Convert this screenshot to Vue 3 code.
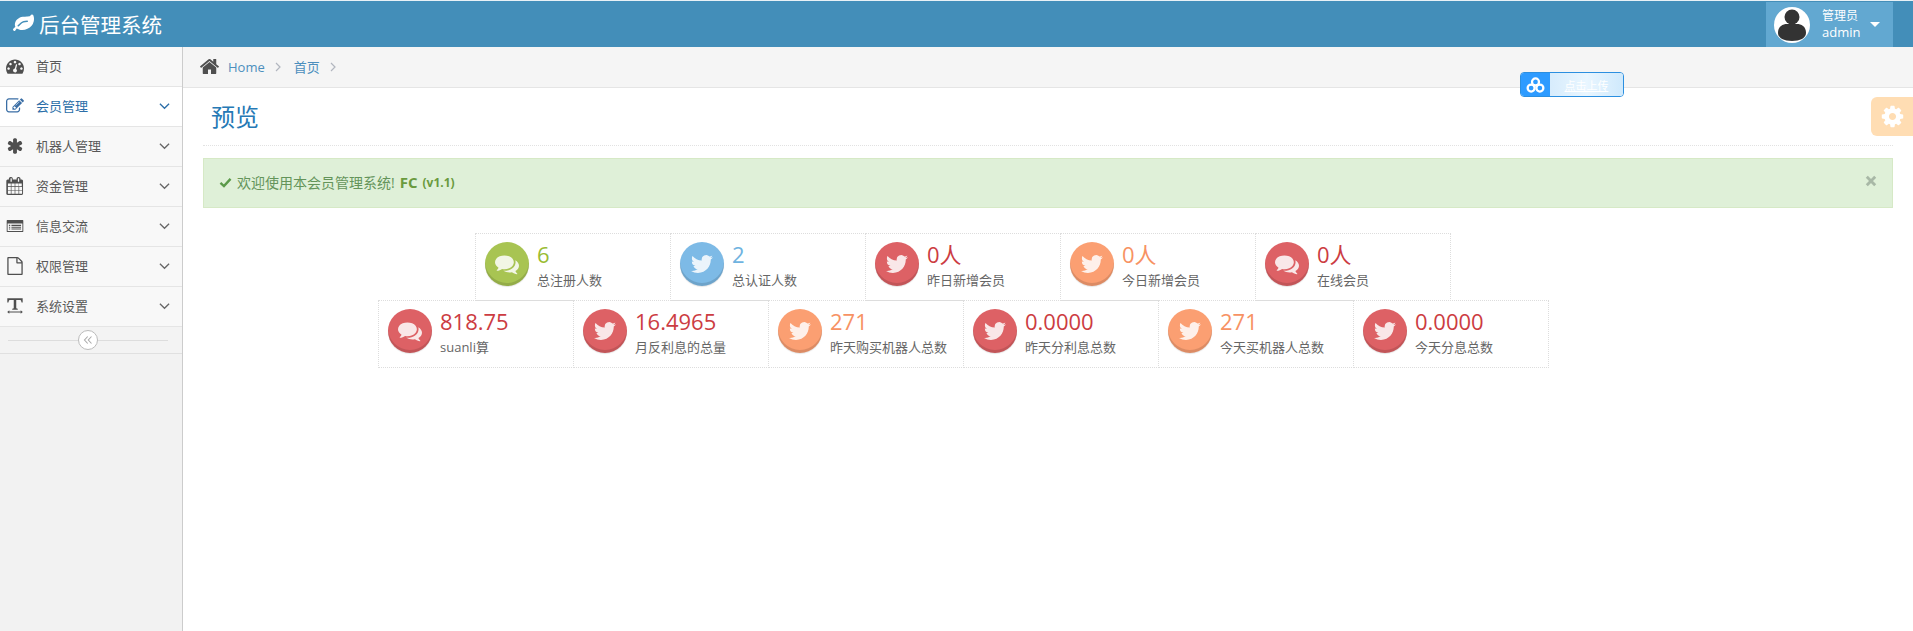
<template>
  <div class="app">
    <header class="navbar">
      <div class="brand">
        <svg class="brand-icon" viewBox="0 0 1792 1792"><path :d="icons.leaf" /></svg>
        <span>后台管理系统</span>
      </div>
      <div class="user">
        <svg class="avatar" viewBox="0 0 36 36">
          <circle cx="18" cy="18" r="18" fill="#fff" />
          <circle cx="18" cy="10" r="7.5" fill="#333" />
          <path d="M4 26c0-7 5-9 9-9h10c4 0 9 2 9 9 0 5-6 8-14 8s-14-3-14-8z" fill="#333" />
        </svg>
        <div class="user-text">
          <small>管理员</small>
          <span>admin</span>
        </div>
        <i class="caret"></i>
      </div>
    </header>

    <div class="main">
      <aside class="sidebar">
        <ul class="menu">
          <li v-for="item in menu" :key="item.text" :class="{ active: item.active }">
            <svg class="menu-icon" viewBox="0 0 1792 1792" v-html="item.svg"></svg>
            <span class="menu-text">{{ item.text }}</span>
            <svg v-if="item.sub" class="chevron" viewBox="0 0 12 8"><path d="M1 1.5l5 5 5-5" /></svg>
          </li>
        </ul>
        <div class="collapse">
          <div class="collapse-btn">
            <svg viewBox="0 0 10 10"><path d="M4.7 1.5L1.5 5l3.2 3.5M8.5 1.5L5.3 5l3.2 3.5" /></svg>
          </div>
        </div>
      </aside>

      <section class="content">
        <nav class="breadcrumbs">
          <svg class="home" viewBox="0 0 1792 1792"><path :d="icons.home" /></svg>
          <a>Home</a>
          <svg class="sep" viewBox="0 0 6 10"><path d="M1 1l4 4-4 4" /></svg>
          <a>首页</a>
          <svg class="sep" viewBox="0 0 6 10"><path d="M1 1l4 4-4 4" /></svg>
        </nav>

        <div class="page">
          <div class="page-header">
            <h1>预览</h1>
          </div>

          <div class="alert">
            <div class="alert-text">
              <svg class="check" viewBox="0 0 14 12"><path d="M1.5 6.5l3.8 3.5 7.2-8" /></svg>
              <span>欢迎使用本会员管理系统!</span>
              <strong>FC</strong>
              <b>(v1.1)</b>
            </div>
            <svg class="close" viewBox="0 0 10 10"><path d="M1.5 1.5l7 7M8.5 1.5l-7 7" /></svg>
          </div>

          <div class="stats">
            <div v-for="(row, i) in rows" :key="i" class="stat-row">
              <div v-for="box in row" :key="box.label" class="stat" :class="box.color">
                <div class="circle">
                  <svg v-if="box.icon === 'chat'" class="chat" viewBox="0 0 1792 1792"><path :d="icons.comments" /></svg>
                  <svg v-else class="bird" viewBox="0 0 24 24"><path :d="icons.twitter" /></svg>
                </div>
                <div class="stat-data">
                  <div class="num">{{ box.num }}</div>
                  <div class="label">{{ box.label }}</div>
                </div>
              </div>
            </div>
          </div>
        </div>
      </section>
    </div>

    <div class="pan">
      <div class="pan-icon">
        <svg viewBox="0 0 24 20">
          <circle cx="12" cy="6.5" r="4" />
          <circle cx="7" cy="13.5" r="4" />
          <circle cx="17" cy="13.5" r="4" />
        </svg>
      </div>
      <div class="pan-text"><span>点击上传</span></div>
    </div>

    <div class="settings">
      <svg viewBox="0 0 1792 1792"><path :d="icons.cog" /></svg>
    </div>
  </div>
</template>

<script setup>
const icons = {
  leaf: 'M1280 704q0-26-19-45t-45-19q-172 0-318 49.5t-259.5 134-235.5 219.5q-19 21-19 45 0 26 19 45t45 19q24 0 45-19 27-24 74-71t67-66q137-124 268.5-176t313.5-52q26 0 45-19t19-45zm512-198q0 95-20 193-46 224-184.5 383t-357.5 268q-214 108-438 108-148 0-286-47-15-5-88-42t-96-37q-16 0-39.5 32t-45 70-52.5 70-60 32q-43 0-63.5-17.5t-45.5-59.5q-2-4-6-11t-5.5-10-3-9.5-1.5-13.5q0-35 31-73.5t68-65.5 68-56 31-48q0-4-14-38t-16-44q-9-51-9-104 0-115 43.5-220t119-184.5 170.5-139 204-95.5q55-18 145-25.5t179.5-9 178.5-6 163.5-24 113.5-56.5l29.5-29.5 29.5-28 27-20 36.5-16 43.5-4.5q39 0 70.5 46t47.5 112 24 124 8 96z',
  home: 'M1472 992v480q0 26-19 45t-45 19h-384v-384h-256v384h-384q-26 0-45-19t-19-45v-480q0-1 .5-3t.5-3l575-474 575 474q1 2 1 6zm223-69l-62 74q-8 9-21 11h-3q-13 0-21-7l-692-577-692 577q-12 8-24 7-13-2-21-11l-62-74q-8-10-7-23.5t11-21.5l719-599q32-26 76-26t76 26l244 204v-195q0-14 9-23t23-9h192q14 0 23 9t9 23v408l219 182q10 8 11 21.5t-7 23.5z',
  comments: 'M1408 768q0 139-94 257t-256.5 186.5-353.5 68.5q-86 0-176-16-124 88-278 128-36 9-86 16h-3q-11 0-20.5-8t-11.5-21q-1-3-1-6.5t.5-6.5 2-6l2.5-5 3.5-5.5 4-5 4.5-5 4-4.5q5-6 23-25t26-29.5 22.5-29 25-38.5 20.5-44q-124-72-195-177t-71-224q0-139 94-257t256.5-186.5 353.5-68.5 353.5 68.5 256.5 186.5 94 257zm384 256q0 120-71 224.5t-195 176.5q10 24 20.5 44t25 38.5 22.5 29 26 29.5 23 25q1 1 4 4.5t4.5 5 4 5 3.5 5.5l2.5 5 2 6 .5 6.5-1 6.5q-3 14-13 22t-22 7q-50-7-86-16-154-40-278-128-90 16-176 16-271 0-472-132 58 4 88 4 161 0 309-45t264-129q125-92 192-212t67-254q0-77-23-152 129 71 204 178t75 230z',
  twitter: 'M23.953 4.57a10 10 0 01-2.825.775 4.958 4.958 0 002.163-2.723c-.951.555-2.005.959-3.127 1.184a4.92 4.92 0 00-8.384 4.482C7.69 8.095 4.067 6.13 1.64 3.162a4.822 4.822 0 00-.666 2.475c0 1.71.87 3.213 2.188 4.096a4.904 4.904 0 01-2.228-.616v.06a4.923 4.923 0 003.946 4.827 4.996 4.996 0 01-2.212.085 4.936 4.936 0 004.604 3.417 9.867 9.867 0 01-6.102 2.105c-.39 0-.779-.023-1.17-.067a13.995 13.995 0 007.557 2.209c9.053 0 13.998-7.496 13.998-13.985 0-.21 0-.42-.015-.63A9.935 9.935 0 0024 4.59z',
  cog: 'M1152 896q0-106-75-181t-181-75-181 75-75 181 75 181 181 75 181-75 75-181zm512-109v222q0 12-8 23t-20 13l-185 28q-19 54-39 91 35 50 107 138 10 12 10 25t-9 23q-27 37-99 108t-94 71q-12 0-26-9l-138-108q-44 23-91 38-16 136-29 186-7 28-36 28h-222q-14 0-24.5-8.5t-11.5-21.5l-28-184q-49-16-90-37l-141 107q-10 9-25 9-14 0-25-11-126-114-165-168-7-10-7-23 0-12 8-23 15-21 51-66.5t54-70.5q-27-50-41-99l-183-27q-13-2-21-12.5t-8-23.5v-222q0-12 8-23t19-13l186-28q14-46 39-92-40-57-107-138-10-12-10-24 0-10 9-23 26-36 98.5-107.5t94.5-71.5q13 0 26 10l138 107q44-23 91-38 16-136 29-186 7-28 36-28h222q14 0 24.5 8.5t11.5 21.5l28 184q49 16 90 37l142-107q9-9 24-9 13 0 25 10 129 119 165 170 7 8 7 22 0 12-8 23-15 21-51 66.5t-54 70.5q26 50 41 98l183 28q13 2 21 12.5t8 23.5z',
}

const p = (d) => `<path fill="currentColor" d="${d}"/>`

const menu = [
  { text: '首页', svg: p('M384 1152q0-53-37.5-90.5t-90.5-37.5-90.5 37.5-37.5 90.5 37.5 90.5 90.5 37.5 90.5-37.5 37.5-90.5zm192-448q0-53-37.5-90.5t-90.5-37.5-90.5 37.5-37.5 90.5 37.5 90.5 90.5 37.5 90.5-37.5 37.5-90.5zm428 481l101-382q6-26-7.5-48.5t-38.5-29.5-48 6.5-30 39.5l-101 382q-60 5-107 43.5t-63 98.5q-20 77 20 146t117 89 146-20 89-117q16-60-6-117t-72-91zm660-33q0-53-37.5-90.5t-90.5-37.5-90.5 37.5-37.5 90.5 37.5 90.5 90.5 37.5 90.5-37.5 37.5-90.5zm-640-640q0-53-37.5-90.5t-90.5-37.5-90.5 37.5-37.5 90.5 37.5 90.5 90.5 37.5 90.5-37.5 37.5-90.5zm448 192q0-53-37.5-90.5t-90.5-37.5-90.5 37.5-37.5 90.5 37.5 90.5 90.5 37.5 90.5-37.5 37.5-90.5zm320 448q0 261-141 483-19 29-54 29h-1402q-35 0-54-29-141-221-141-483 0-182 71-348t191-286 286-191 348-71 348 71 286 191 191 286 71 348z') },
  { text: '会员管理', sub: true, active: true, svg: p('M888 1184l116-116-152-152-116 116v56h96v96h56zm440-720q-16-16-33 1l-350 350q-17 17-1 33t33-1l350-350q17-17 1-33zm80 594v190q0 119-84.5 203.5t-203.5 84.5h-832q-119 0-203.5-84.5t-84.5-203.5v-832q0-119 84.5-203.5t203.5-84.5h832q63 0 117 25 15 7 18 23 3 17-9 29l-49 49q-14 14-32 8-23-6-45-6h-832q-66 0-113 47t-47 113v832q0 66 47 113t113 47h832q66 0 113-47t47-113v-126q0-13 9-22l64-64q15-15 35-7t20 29zm-96-738l288 288-672 672h-288v-288zm444 132l-92 92-288-288 92-92q28-28 68-28t68 28l152 152q28 28 28 68t-28 68z') },
  { text: '机器人管理', sub: true, svg: p('M1546 1050q46 26 59.5 77.5t-12.5 97.5l-64 110q-26 46-77.5 59.5t-97.5-12.5l-266-153v307q0 52-38 90t-90 38h-128q-52 0-90-38t-38-90v-307l-266 153q-46 26-97.5 12.5t-77.5-59.5l-64-110q-26-46-12.5-97.5t59.5-77.5l266-154-266-154q-46-26-59.5-77.5t12.5-97.5l64-110q26-46 77.5-59.5t97.5 12.5l266 153v-307q0-52 38-90t90-38h128q52 0 90 38t38 90v307l266-153q46-26 97.5-12.5t77.5 59.5l64 110q26 46 12.5 97.5t-59.5 77.5l-266 154z') },
  { text: '资金管理', sub: true, svg: p('M192 1664h288v-288h-288v288zm352 0h320v-288h-320v288zm-352-352h288v-320h-288v320zm352 0h320v-320h-320v320zm-352-384h288v-288h-288v288zm736 736h320v-288h-320v288zm-384-736h320v-288h-320v288zm768 736h288v-288h-288v288zm-384-352h320v-320h-320v320zm-352-864v-288q0-13-9.5-22.5t-22.5-9.5h-64q-13 0-22.5 9.5t-9.5 22.5v288q0 13 9.5 22.5t22.5 9.5h64q13 0 22.5-9.5t9.5-22.5zm736 864h288v-320h-288v320zm-384-384h320v-288h-320v288zm352 0h288v-288h-288v288zm32-480v-288q0-13-9.5-22.5t-22.5-9.5h-64q-13 0-22.5 9.5t-9.5 22.5v288q0 13 9.5 22.5t22.5 9.5h64q13 0 22.5-9.5t9.5-22.5zm384-64v1280q0 52-38 90t-90 38h-1408q-52 0-90-38t-38-90v-1280q0-52 38-90t90-38h128v-96q0-66 47-113t113-47h64q66 0 113 47t47 113v96h384v-96q0-66 47-113t113-47h64q66 0 113 47t47 113v96h128q52 0 90 38t38 90z') },
  { text: '信息交流', sub: true, svg: '<path fill="currentColor" fill-rule="evenodd" d="M110 300h1572q40 0 40 40v1110q0 40-40 40H110q-40 0-40-40V340q0-40 40-40zm50 340v760h1472V640H160z"/><path fill="currentColor" d="M290 780h130v110H290zM290 960h130v110H290zM290 1140h130v110H290zM540 780h960v110H540zM540 960h960v110H540zM540 1140h960v110H540z"/>' },
  { text: '权限管理', sub: true, svg: p('M1596 380q28 28 48 76t20 88v1152q0 40-28 68t-68 28h-1344q-40 0-68-28t-28-68v-1600q0-40 28-68t68-28h896q40 0 88 20t76 48zm-444-244v376h376q-10-29-22-41l-313-313q-12-12-41-22zm384 1528v-1024h-416q-40 0-68-28t-28-68v-416h-768v1536h1280z') },
  { text: '系统设置', sub: true, svg: '<path fill="currentColor" d="M130 130h1530v420h-110q-40-210-110-250H1020v790q0 50 150 80v110H620v-110q150-30 150-80V300H350q-70 40-110 250H130zM120 1500l210-170v120h1130v-120l210 170-210 170v-120H330v120z"/>' },
]

const rows = [
  [
    { num: '6', label: '总注册人数', color: 'green', icon: 'chat' },
    { num: '2', label: '总认证人数', color: 'blue', icon: 'bird' },
    { num: '0人', label: '昨日新增会员', color: 'red', icon: 'bird' },
    { num: '0人', label: '今日新增会员', color: 'orange', icon: 'bird' },
    { num: '0人', label: '在线会员', color: 'red', icon: 'chat' },
  ],
  [
    { num: '818.75', label: 'suanli算', color: 'red', icon: 'chat' },
    { num: '16.4965', label: '月反利息的总量', color: 'red', icon: 'bird' },
    { num: '271', label: '昨天购买机器人总数', color: 'orange', icon: 'bird' },
    { num: '0.0000', label: '昨天分利息总数', color: 'red', icon: 'bird' },
    { num: '271', label: '今天买机器人总数', color: 'orange', icon: 'bird' },
    { num: '0.0000', label: '今天分息总数', color: 'red', icon: 'bird' },
  ],
]
</script>

<style>
html, body {
  margin: 0;
  background: #fff;
}
</style>

<style scoped>
.app {
  position: relative;
  min-height: 631px;
  font-family: "Open Sans", "Noto Sans CJK SC", sans-serif;
  font-size: 13px;
  color: #393939;
  overflow: hidden;
}

.navbar {
  display: flex;
  justify-content: space-between;
  height: 45px;
  padding: 2px 20px 0 13px;
  background: #438eb9;
  box-shadow: inset 0 1px 0 #e8f1f6;
}
.brand {
  display: flex;
  align-items: center;
  gap: 5px;
  padding-bottom: 2px;
  color: #fff;
  font-size: 20.5px;
}
.brand-icon {
  width: 21px;
  height: 21px;
  fill: #fff;
}
.user {
  display: flex;
  align-items: center;
  width: 127px;
  box-sizing: border-box;
  padding-left: 8px;
  background: #62a8d1;
  color: #fff;
}
.avatar {
  width: 36px;
  height: 36px;
  margin-right: 12px;
}
.user-text {
  display: flex;
  flex-direction: column;
  width: 47px;
}
.user-text small {
  font-size: 12px;
  line-height: 16px;
}
.user-text span {
  font-size: 13px;
  line-height: 17px;
}
.caret {
  width: 0;
  height: 0;
  margin-left: 1px;
  border-top: 5px solid #fff;
  border-left: 5px solid transparent;
  border-right: 5px solid transparent;
}

.main {
  display: flex;
  min-height: 584px;
}
.sidebar {
  width: 182px;
  flex: none;
  background: #f2f2f2;
  border-right: 1px solid #ccc;
}
.menu {
  list-style: none;
  margin: 0;
  padding: 0;
}
.menu li {
  display: flex;
  align-items: center;
  box-sizing: border-box;
  height: 40px;
  padding-bottom: 2px;
  background: #f8f8f8;
  border-bottom: 1px solid #e5e5e5;
  color: #585858;
}
.menu li.active {
  background: #fff;
  color: #2b6ea8;
}
.menu-icon {
  width: 18px;
  height: 18px;
  margin: 0 12px 0 6px;
  color: #4f4f4f;
  flex: none;
}
.active .menu-icon {
  color: #3a6ea5;
}
.chevron {
  width: 11px;
  height: 8px;
  margin-left: auto;
  margin-right: 12px;
  fill: none;
  stroke: #666;
  stroke-width: 1.4;
}
.active .chevron {
  stroke: #2b6ea8;
}
.collapse {
  display: flex;
  align-items: center;
  justify-content: center;
  box-sizing: border-box;
  height: 27px;
  padding-right: 6px;
  background: linear-gradient(#ddd, #ddd) no-repeat 8px center / 160px 1px, #f3f3f3;
  border-bottom: 1px solid #e0e0e0;
}
.collapse-btn {
  display: flex;
  align-items: center;
  justify-content: center;
  width: 18px;
  height: 18px;
  border: 1px solid #bbb;
  border-radius: 50%;
  background: #fff;
}
.collapse-btn svg {
  width: 10px;
  height: 10px;
  fill: none;
  stroke: #aaa;
  stroke-width: 1.1;
}

.content {
  flex: 1;
  min-width: 0;
}
.breadcrumbs {
  display: flex;
  align-items: center;
  box-sizing: border-box;
  height: 41px;
  padding: 0 0 1px 16px;
  background: #f5f5f5;
  border-bottom: 1px solid #e5e5e5;
  color: #4c8fbd;
}
.home {
  width: 21px;
  height: 21px;
  margin-right: 8px;
  fill: #4f4f4f;
}
.sep {
  width: 6px;
  height: 10px;
  margin: 0 13px 0 10px;
  fill: none;
  stroke: #b2b6bf;
  stroke-width: 1.2;
}
.page {
  padding: 0 20px;
}
.page-header {
  box-sizing: border-box;
  height: 58px;
  padding: 0 0 2px 8px;
  border-bottom: 1px dotted #e2e2e2;
  display: flex;
  align-items: center;
}
.page-header h1 {
  margin: 0;
  font-size: 24px;
  font-weight: 400;
  color: #2679b5;
}
.alert {
  display: flex;
  align-items: center;
  justify-content: space-between;
  box-sizing: border-box;
  height: 50px;
  margin-top: 12px;
  padding: 0 15px 2px 15px;
  background: #dff0d8;
  border: 1px solid #d6e9c6;
  color: #64945a;
  font-size: 14px;
}
.alert-text {
  display: flex;
  align-items: center;
}
.check {
  width: 13px;
  height: 11px;
  margin-right: 5px;
  fill: none;
  stroke: #5b9a4a;
  stroke-width: 2.6;
}
.alert strong {
  margin-left: 5px;
  font-size: 15px;
  font-weight: 700;
  color: #6a9a3e;
}
.alert b {
  margin-left: 5px;
  font-size: 12px;
  font-weight: 700;
  color: #6a9a3e;
}
.close {
  width: 12px;
  height: 12px;
  margin-bottom: 3px;
  fill: none;
  stroke: #a8b8a6;
  stroke-width: 2.4;
}

.stats {
  width: 1521px;
  margin-top: 25px;
}
.stat-row {
  display: flex;
  justify-content: center;
}
.stat-row:last-child {
  padding-left: 1px;
}
.stat {
  display: flex;
  box-sizing: border-box;
  width: 196px;
  height: 68px;
  margin-left: -1px;
  margin-bottom: -1px;
  padding: 8px 0 0 9px;
  border: 1px dotted #ddd;
}
.circle {
  display: flex;
  align-items: center;
  justify-content: center;
  width: 44px;
  height: 44px;
  flex: none;
  border-radius: 50%;
  box-shadow: inset 0 -3px 0 rgba(0, 0, 0, 0.12), 0 1px 1px rgba(0, 0, 0, 0.1);
}
.bird {
  width: 22px;
  height: 22px;
  fill: #fff;
  opacity: 0.85;
}
.chat {
  width: 24px;
  height: 24px;
  fill: #fff;
  opacity: 0.85;
}
.stat-data {
  margin-left: 8px;
}
.num {
  font-size: 22px;
  line-height: 28px;
  margin-top: -2px;
}
.label {
  font-size: 13px;
  line-height: 18px;
  margin-top: 3px;
  color: #666;
  white-space: nowrap;
}
.green .circle { background: #a8c452; }
.green .num { color: #9abc32; }
.blue .circle { background: #7dbae6; }
.blue .num { color: #6fb3e0; }
.red .circle { background: #dd6165; }
.red .num { color: #cc3c42; }
.orange .circle { background: #fb9f72; }
.orange .num { color: #f79263; }

.pan {
  position: absolute;
  left: 1520px;
  top: 72px;
  display: flex;
  box-sizing: border-box;
  width: 104px;
  height: 25px;
  border: 1px solid #2b8fe0;
  border-radius: 4px;
  overflow: hidden;
}
.pan-icon {
  display: flex;
  align-items: center;
  justify-content: center;
  width: 29px;
  background: #2d9bff;
}
.pan-icon svg {
  width: 21px;
  height: 18px;
  fill: none;
  stroke: #fff;
  stroke-width: 2.6;
}
.pan-text {
  flex: 1;
  display: flex;
  align-items: center;
  justify-content: center;
  background: linear-gradient(90deg, #d7ecfc, #e9f6ff 50%, #cfe9fc);
  color: #fff;
  font-size: 11px;
  text-decoration: underline;
}
.settings {
  position: absolute;
  right: 0;
  top: 97px;
  display: flex;
  align-items: center;
  justify-content: center;
  width: 42px;
  height: 39px;
  border-radius: 6px 0 0 6px;
  background: #ffddb3;
}
.settings svg {
  width: 25px;
  height: 25px;
  fill: #fff;
}
</style>
